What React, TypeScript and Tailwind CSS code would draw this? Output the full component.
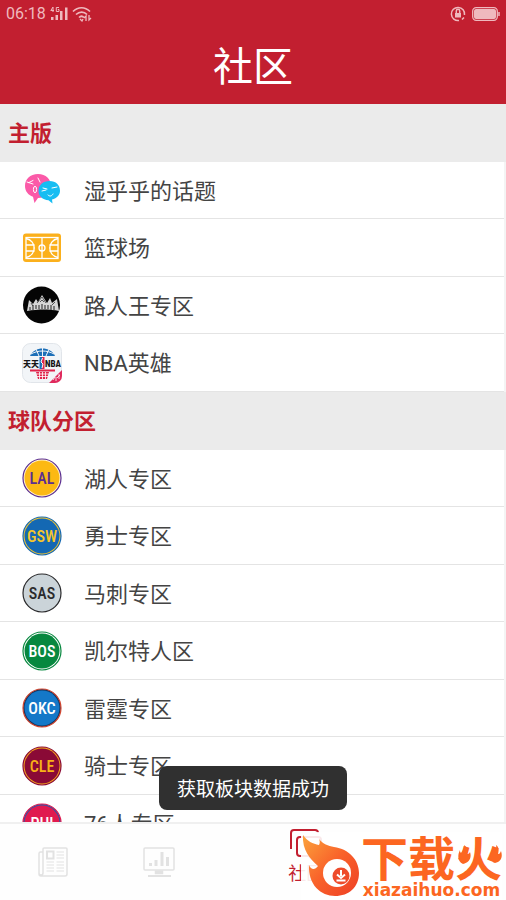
import type { ReactNode } from 'react';

interface Board {
  name: string;
  icon: ReactNode;
}

interface BadgeProps {
  code: string;
  fill: string;
  edge: string;
  ring: string;
  text: string;
}

// Round team logo with a double border
function TeamBadge({ code, fill, edge, ring, text }: BadgeProps) {
  return (
    <svg viewBox="0 0 40 40" className="size-10">
      <circle cx="20" cy="20" r="19" fill={ring} stroke={edge} strokeWidth="1.2" />
      <circle cx="20" cy="20" r="17.5" fill={fill} />
      <text
        x="20"
        y="26"
        textAnchor="middle"
        fill={text}
        fontSize="16"
        fontWeight="500"
        fontFamily="'Roboto Condensed', 'Liberation Sans Narrow', Roboto, sans-serif"
      >
        {code}
      </text>
    </svg>
  );
}

function ChatIcon() {
  return (
    <svg viewBox="0 0 40 40" className="size-10" fill="none">
      <path d="M16 4C8 4 3 9 3 16c0 5 3 9 8 10.800L12.500 33l3.500-5c8 0 13-5 13-12S24 4 16 4z" fill="#fb5aa8" />
      <path d="M27.500 11c-6.500 0-11 4-11 9.800 0 5.200 4 9.200 10 9.500l4 3.200-.5-4c5-1.300 8-4.500 8-8.700 0-5.800-4-9.800-10.500-9.800z" fill="#17bdf2" />
      <path d="M5 12l6 2M7 12.500l4-2M16 8l2 4M20 21l4-1M30 18l5-1M21 18l4 1M26 25c2 2 4 1 5-1" stroke="#fff" strokeWidth="1" strokeLinecap="round" />
      <ellipse cx="13" cy="19.500" rx="1.600" ry="3.200" stroke="#fff" />
    </svg>
  );
}

function CourtIcon() {
  return (
    <svg viewBox="0 0 40 40" className="size-10" fill="none" stroke="#fff" strokeWidth="1.300">
      <rect x="1" y="5.500" width="38" height="28.500" rx="3" fill="#fbb01c" stroke="none" />
      <rect x="4" y="9.500" width="32" height="21" />
      <path d="M20 9.500v21M4 10.500c11 2 11 17 0 19M36 10.500c-11 2-11 17 0 19M4 17h8v6H4M36 17h-8v6h8" />
      <circle cx="20" cy="20" r="3" />
    </svg>
  );
}

function StreetKingIcon() {
  return (
    <svg viewBox="0 0 40 40" className="size-10">
      <circle cx="19.500" cy="20" r="18.500" fill="#050505" />
      <path d="M5 26l2-11 4 4 3-5 2 3 4-7 5 8 3-5 2 5 5-4 2 12c-9-2-21-2-32 0z" fill="#d6d6d6" />
      <path d="M15 18l5-6 4 6M9 18l2 3M30 20l3-3M18 17l2-2 2 2" stroke="#333" strokeWidth=".8" fill="none" />
      <path d="M8 22v3M11 20v5M14 20v4M17 20v4M20 19v5M23 20v4M26 20v4M29 20v5M32 21v4" stroke="#222" strokeWidth="1" />
    </svg>
  );
}

function NbaIcon() {
  return (
    <svg viewBox="0 0 40 40" className="size-10" fill="none">
      <rect x=".5" y=".5" width="39" height="39" rx="8" fill="#f2f5f8" stroke="#e1e5ea" />
      <path d="M8 13c4-10 21-10 25 0z" fill="#1c6fb8" />
      <path d="M20.500 5v8M14 6l3 7M27 6l-3 7M9 11c7-4 16-4 23 0" stroke="#f2f5f8" />
      <text x="1" y="24" fill="#161616" fontSize="8" fontWeight="900" fontFamily="'Noto Sans CJK SC', sans-serif">天天</text>
      <path d="M17.500 14H20v12h-2.500z" fill="#1c6fb8" />
      <path d="M20 14h2.500v12H20z" fill="#e0244c" />
      <path d="M20.500 15L19 19l2 2-1 4" stroke="#fff" />
      <text x="23" y="24" fill="#161616" fontSize="9" fontWeight="800" fontFamily="'Roboto Condensed', Roboto, sans-serif">NBA</text>
      <path d="M8 26.500h25v2H8zM14 29h13l-2 7h-9z" fill="#e0244c" />
      <path d="M17.500 29v7M20.500 29v7M23.500 29v7M14 31h13M15 33.500h11" stroke="#fff" strokeWidth=".8" />
      <path d="M40 27v6a7 7 0 0 1-7 7h-6z" fill="#e02a5d" />
      <path d="M31 37l2-3M34 38v-4M35 35l3-3M37 36v-5" stroke="#fff" strokeWidth=".8" />
    </svg>
  );
}

const mainBoards: Board[] = [
  { name: '湿乎乎的话题', icon: <ChatIcon /> },
  { name: '篮球场', icon: <CourtIcon /> },
  { name: '路人王专区', icon: <StreetKingIcon /> },
  { name: 'NBA英雄', icon: <NbaIcon /> },
];

const teamBoards: Board[] = [
  { name: '湖人专区', icon: <TeamBadge code="LAL" fill="#fcb913" edge="#5b2e91" ring="#fff3d0" text="#5b2e91" /> },
  { name: '勇士专区', icon: <TeamBadge code="GSW" fill="#1468b3" edge="#1468b3" ring="#f4c430" text="#f6c62b" /> },
  { name: '马刺专区', icon: <TeamBadge code="SAS" fill="#cbd4d9" edge="#2a2a2c" ring="#cbd4d9" text="#2a2a2c" /> },
  { name: '凯尔特人区', icon: <TeamBadge code="BOS" fill="#07883f" edge="#07883f" ring="#ffffff" text="#ffffff" /> },
  { name: '雷霆专区', icon: <TeamBadge code="OKC" fill="#1478c8" edge="#d3462f" ring="#15355f" text="#ffffff" /> },
  { name: '骑士专区', icon: <TeamBadge code="CLE" fill="#8a0a36" edge="#8a0a36" ring="#f5a81c" text="#f8b117" /> },
  { name: '76人专区', icon: <TeamBadge code="PHI" fill="#e01a4f" edge="#e01a4f" ring="#2a58a8" text="#ffffff" /> },
];

function StatusBar() {
  return (
    <div className="flex h-7 items-center justify-between px-1.5 text-[#efb9be]">
      <div className="flex items-center gap-1">
        <span className="font-[Roboto] text-base">06:18</span>
        <svg viewBox="0 0 18 16" className="h-4 w-[18px]" fill="currentColor">
          <path d="M1 11h2.500v3H1zM5.500 9H8v5H5.500zM10 5h2.500v9H10zM15 1.500h2.500V14H15z" />
          <path d="M3 1L.8 4.500H4M3 1v5M9 1.500H6.300v4H9V3.500H7.800" fill="none" stroke="currentColor" />
        </svg>
        <svg viewBox="0 0 20 16" className="h-4 w-5" fill="none" stroke="currentColor" strokeWidth="1.700">
          <path d="M1 5.500c5-5 12-5 17 0M4 8.500c3.500-3.300 8-3.300 11 0M7 11.500c1.500-1.500 3.500-1.500 5 0" />
          <path d="M8 13l2 2 1-2M14 15v-5l-2 2M17 9v5l2-2" strokeWidth="1.300" />
        </svg>
      </div>
      <div className="flex items-center gap-1.5">
        <svg viewBox="0 0 16 16" className="size-4" fill="none" stroke="currentColor" strokeWidth="1.500">
          <path d="M9 14.500A6.600 6.600 0 1 1 14.500 9M12 13.500l2-2" />
          <path d="M5 7h6v4.500H5z" fill="currentColor" stroke="none" />
          <path d="M6.300 7V5a1.700 1.700 0 0 1 3.400 0v2" />
        </svg>
        <svg viewBox="0 0 28 14" className="h-3.5 w-7" fill="none">
          <rect x=".7" y=".7" width="24.600" height="12.600" rx="3.500" stroke="currentColor" strokeWidth="1.300" />
          <rect x="2" y="2" width="22" height="10" rx="2" fill="currentColor" />
          <path d="M27 5v4" stroke="currentColor" strokeWidth="1.500" />
        </svg>
      </div>
    </div>
  );
}

function BoardSection({ title, boards }: { title: string; boards: Board[] }) {
  return (
    <section>
      <h2 className="flex h-[58px] items-center bg-[#ebebeb] px-2 text-[22px] font-bold text-[#c21f30]">{title}</h2>
      <ul className="border-r-2 border-[#f4f4f4]">
        {boards.map((board) => (
          <li key={board.name} className="border-b border-[#e4e4e4] odd:h-[57px] even:h-[58px]">
            <a href="#" className="flex h-full items-center gap-[22px] pl-[22px] text-[22px] text-[#444]">
              {board.icon}
              <span className="pt-0.5">{board.name}</span>
            </a>
          </li>
        ))}
      </ul>
    </section>
  );
}

function TabBar() {
  return (
    <nav className="relative grid h-[78px] shrink-0 grid-cols-[21%_21%_1fr_21%] border-t-2 border-[#f0f0f0] bg-[#fefefe]">
      <button aria-label="新闻" className="flex items-center justify-center text-[#e2e2e2]">
        <svg viewBox="0 0 30 30" className="size-[30px]" fill="none" stroke="currentColor" strokeWidth="1.500">
          <path d="M5 5H2.500A1.500 1.500 0 0 0 1 6.500V27a2 2 0 0 0 2 2h24a2 2 0 0 0 2-2V2a1 1 0 0 0-1-1H6a1 1 0 0 0-1 1v24a2 2 0 0 1-4 0" />
          <path d="M9 4.500h6.500v7H9z" strokeWidth="2" />
          <path d="M18.500 5H26M18.500 8H26M18.500 11H26M8.500 15H16M8.500 18H16M8.500 21H16M8.500 24H16M18.500 15H26M18.500 18H26M18.500 21H26M18.500 24H26" strokeWidth="1.200" />
        </svg>
      </button>
      <button aria-label="数据" className="flex items-center justify-center text-[#e2e2e2]">
        <svg viewBox="0 0 32 30" className="h-[30px] w-8" fill="none" stroke="currentColor" strokeWidth="1.500">
          <rect x="1" y="1" width="30" height="22" rx="1" />
          <path d="M7.500 19v-3M13 19v-6M19 19V5M24.500 19V10" strokeWidth="3" />
          <path d="M12.500 24h7v2.500h-7z" fill="currentColor" />
          <path d="M5 29h23" strokeWidth="2" />
        </svg>
      </button>
      <button className="flex flex-col items-center pt-1 text-lg text-[#c21f30]">
        <svg viewBox="0 0 34 32" className="h-8 w-[34px]" fill="none" stroke="currentColor" strokeWidth="2">
          <path d="M2 21V5a3 3 0 0 1 3-3h21a3 3 0 0 1 3 3" />
          <path d="M11 28a3 3 0 0 1-3-3V12a3 3 0 0 1 3-3h18a3 3 0 0 1 3 3v13a3 3 0 0 1-3 3h-3l-3 3-3-3z" />
        </svg>
        社区
      </button>
      <Watermark />
    </nav>
  );
}

function Watermark() {
  return (
    <div className="absolute right-1 bottom-0 flex h-[68px] items-end bg-white/90 text-[#fc6621]">
      <svg viewBox="0 0 60 66" className="h-[66px] w-[60px]" fill="none">
        <defs>
          <linearGradient id="flame" x1="0" y1="0" x2="1" y2="1">
            <stop offset="0" stopColor="#fba33c" />
            <stop offset=".5" stopColor="#f9622a" />
            <stop offset="1" stopColor="#ee3f25" />
          </linearGradient>
        </defs>
        <path d="M2 1c4 6 10 9 16 10 1-2 1-4 0-6 4 5 9 7 15 8 15 2 25 13 25 26 0 14-10 23-24 23S7 51 8 31c2 5 6 5 9 1C9 25 1 16 2 1z" fill="url(#flame)" />
        <circle cx="36" cy="39" r="14" fill="#fff" />
        <circle cx="40" cy="42" r="8.500" fill="#ee4b2b" />
        <path d="M40 36v6M36 40.500l4 3.500 4-3.500M35.500 46.500h9" stroke="#fff" strokeWidth="2" />
      </svg>
      <div className="relative flex flex-col items-center">
        <span className="text-[47px] leading-10 font-bold">下载火</span>
        <span className="font-['DejaVu_Sans'] text-[17px] leading-5 font-bold">xiazaihuo.com</span>
        {/* small flames on both sides of the last character */}
        <svg viewBox="0 0 44 24" className="absolute top-1 right-0 h-6 w-11" fill="currentColor">
          <path d="M6 1c1 4-1 5-3 8-1-1-1-2-1-3-3 6-2 12 3 14 6-1 9-6 7-12-1 2-2 2-3 2 1-4 0-7-3-9z" />
          <path d="M38 1c1 4-1 5-3 8-1-1-1-2-1-3-2 6-2 12 3 13 6-1 8-6 6-12-1 2-1 3-3 3 1-4 1-7-2-9z" />
        </svg>
      </div>
    </div>
  );
}

export default function App() {
  return (
    <div className="relative flex h-screen flex-col overflow-hidden bg-white font-[Roboto,'Noto_Sans_CJK_SC',sans-serif]">
      <header className="h-[104px] shrink-0 bg-[#c21f30]">
        <StatusBar />
        <h1 className="text-center text-[40px] leading-[80px] text-white">社区</h1>
      </header>
      <main className="min-h-0 flex-1 overflow-hidden">
        <BoardSection title="主版" boards={mainBoards} />
        <BoardSection title="球队分区" boards={teamBoards} />
      </main>
      <TabBar />
      <div role="status" className="absolute bottom-[90px] left-1/2 flex h-11 -translate-x-1/2 items-center rounded-lg bg-[#303030] px-[18px] pt-1 text-[19px] whitespace-nowrap text-white">
        获取板块数据成功
      </div>
    </div>
  );
}
